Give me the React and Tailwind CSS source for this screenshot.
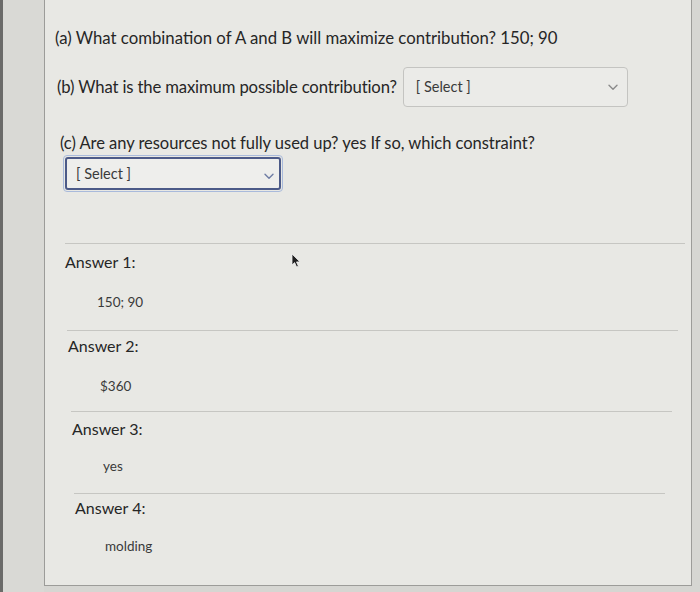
import React from "react";

function Chevron({ className }) {
  return (
    <svg width="10" height="7" viewBox="0 0 10 7" className={className} fill="none">
      <path d="M1 1.2 L5 5.2 L9 1.2" stroke="currentColor" strokeWidth="1.4" strokeLinecap="round" strokeLinejoin="round" />
    </svg>
  );
}

function Answer({ label, value, padL, valL }) {
  return (
    <div className="flex flex-col">
      <div className={`${padL} text-[16px] leading-[20px] text-[#262626]`}>{label}</div>
      <div className={`${valL} text-[13.5px] leading-[20px] text-[#3a3a3a]`}>{value}</div>
    </div>
  );
}

export default function App() {
  return (
    <div
      className="relative w-[700px] h-[592px] overflow-hidden bg-[#d6d6d2] flex"
      style={{ fontFamily: "Lato, 'Open Sans', sans-serif" }}
    >
      <div className="w-[3px] h-full bg-[#6b6b69]" />
      <div className="w-[41px] h-full bg-[#d9d9d5]" />
      <div className="flex-1 flex flex-col">
        <div className="w-[648px] h-[586px] bg-[#e8e8e4] border-l border-r border-b border-[#9c9c99] flex flex-col">
          <div className="pt-[26px] pl-[10px] text-[16.75px] leading-[24px] text-[#262626]">
            (a) What combination of A and B will maximize contribution? 150; 90
          </div>
          <div className="mt-[17px] pl-[12px] flex items-center">
            <span className="text-[16.7px] leading-[24px] text-[#262626] tracking-[-0.15px]">
              (b) What is the maximum possible contribution?
            </span>
            <div className="ml-[6px] w-[225px] h-[40px] rounded-[4px] border border-[#c4c4c1] bg-[#ebebe8] flex items-center justify-between pl-[12px] pr-[9px]">
              <span className="text-[14.5px] text-[#3a3a3a]">[ Select ]</span>
              <Chevron className="text-[#8a8a8a]" />
            </div>
          </div>
          <div className="mt-[24px] pl-[15px] text-[16.55px] leading-[24px] text-[#262626] tracking-[-0.05px]">
            (c) Are any resources not fully used up? yes If so, which constraint?
          </div>
          <div className="pl-[18px]">
            <div className="w-[220px] h-[37px] rounded-[4px] border border-[#a9badb] p-px">
              <div className="w-full h-full rounded-[3px] border-2 border-[#4c5a88] bg-[#eeeeec] flex items-center justify-between pl-[9px] pr-[5px]">
                <span className="text-[14.5px] text-[#3a3a3a]">[ Select ]</span>
                <Chevron className="text-[#6d7ba3] mt-[6px]" />
              </div>
            </div>
          </div>

          <div className="mt-[51px] ml-[20px] w-[620px] h-px bg-[#c6c6c2]" />
          <div className="mt-[8px]">
            <Answer label="Answer 1:" value="150; 90" padL="pl-[20px]" valL="mt-[20px] pl-[52px]" />
          </div>
          <div className="mt-[18px] ml-[22px] w-[611px] h-px bg-[#c6c6c2]" />
          <div className="mt-[5px]">
            <Answer label="Answer 2:" value="$360" padL="pl-[23px]" valL="mt-[20px] pl-[55px]" />
          </div>
          <div className="mt-[15px] ml-[26px] w-[601px] h-px bg-[#c6c6c2]" />
          <div className="mt-[7px]">
            <Answer label="Answer 3:" value="yes" padL="pl-[27px]" valL="mt-[17px] pl-[58px]" />
          </div>
          <div className="mt-[17px] ml-[29px] w-[591px] h-px bg-[#c6c6c2]" />
          <div className="mt-[4px]">
            <Answer label="Answer 4:" value="molding" padL="pl-[30px]" valL="mt-[18px] pl-[60px]" />
          </div>
        </div>
      </div>

      <svg className="absolute left-[291px] top-[253px]" width="11" height="15" viewBox="0 0 11 15">
        <path d="M1 1 L1 12 L3.6 9.6 L5.6 14 L7.4 13.2 L5.5 8.9 L9 8.9 Z" fill="#1f1f1f" stroke="#f0f0f0" strokeWidth="0.8" />
      </svg>
    </div>
  );
}
